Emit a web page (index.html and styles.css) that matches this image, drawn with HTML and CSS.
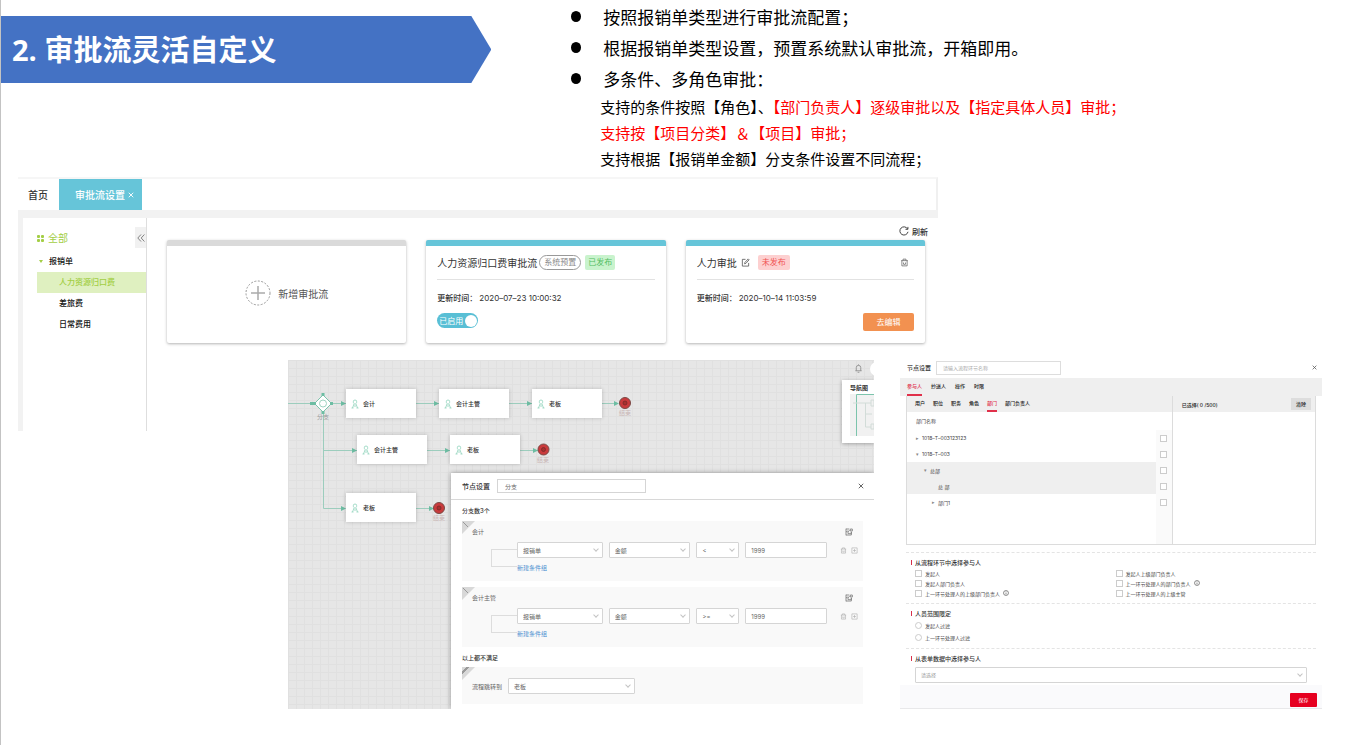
FILE: index.html
```html
<!DOCTYPE html>
<html lang="zh-CN">
<head>
<meta charset="utf-8">
<title>审批流灵活自定义</title>
<link rel="stylesheet" href="styles.css">
</head>
<body>
<svg width="0" height="0" class="defs" aria-hidden="true">
  <symbol id="i-person" viewBox="0 0 8 10"><path d="M4 1a1.7 1.7 0 0 1 1.7 1.8C5.700 4 5 5 4 5S2.300 4 2.300 2.800A1.700 1.700 0 0 1 4 1zM3 5 1.500 9M5 5l1.500 4M.5 9h2M5.500 9h2M4 6v2" fill="none" stroke="#8fd3bb" stroke-width=".8"/></symbol>
  <symbol id="i-trash" viewBox="0 0 12 12"><path d="M1.500 3.500h9M4 3.500V1.500h4v2M2.500 3.500v7h7v-7M4.700 6v2M7.300 6v2M4.500 8.500h3" fill="none" stroke="currentColor"/></symbol>
  <symbol id="i-plus" viewBox="0 0 12 12"><path d="M1.500 1.500h9v9h-9zM6 3.500v5M3.500 6h5" fill="none" stroke="currentColor"/></symbol>
  <symbol id="i-copy" viewBox="0 0 12 12"><path d="M1.500 1v10M1.500 1.500h5M1.500 5.500h2M1.500 10.500h8M4.500 3.500v5h5v-3M5 5.500 7 3.500M8 1.500h3v3h-3zM9.500 6v4.500" fill="none" stroke="currentColor" stroke-width="1.200"/></symbol>
  <symbol id="i-close" viewBox="0 0 8 8"><path d="m1 1 6 6M7 1 1 7" fill="none" stroke="currentColor" stroke-width="1.200"/></symbol>
  <symbol id="i-info" viewBox="0 0 8 8"><circle cx="4" cy="4" r="3.300" fill="none" stroke="currentColor" stroke-width=".8"/><path d="M4 2v.8M4 3.500V6" stroke="currentColor" stroke-width=".8"/></symbol>
</svg>

<main class="slide">
  <header class="intro">
    <h1 class="banner">2. 审批流灵活自定义</h1>
    <div class="notes">
      <ul class="points">
        <li>按照报销单类型进行审批流配置；</li>
        <li>根据报销单类型设置，预置系统默认审批流，开箱即用。</li>
        <li>多条件、多角色审批：</li>
      </ul>
      <p>支持的条件按照【角色】、<em>【部门负责人】逐级审批以及【指定具体人员】审批；</em></p>
      <p><em>支持按【项目分类】＆【项目】审批；</em></p>
      <p>支持根据【报销单金额】分支条件设置不同流程；</p>
    </div>
  </header>

  <div class="shots">
    <section class="app">
      <nav class="tabs">
        <a href="#home">首页</a>
        <a href="#flow" class="current">审批流设置<svg class="x"><use href="#i-close"/></svg></a>
      </nav>
      <div class="app-body">
        <aside class="side">
          <div class="side-top">
            <a href="#all" class="all"><span class="dots"><i></i><i></i><i></i><i></i></span>全部</a>
            <button class="fold" aria-label="收起"><svg viewBox="0 0 8 8"><path d="M4 .5.8 4 4 7.500M7.400.5 4.200 4l3.200 3.500" fill="none" stroke="#777" stroke-width=".9"/></svg></button>
          </div>
          <ul class="menu">
            <li><a href="#bx" class="group">报销单</a></li>
            <li><a href="#hr" class="current">人力资源归口费</a></li>
            <li><a href="#cl">差旅费</a></li>
            <li><a href="#rc">日常费用</a></li>
          </ul>
        </aside>
        <div class="content">
          <div class="toolbar"><button class="refresh"><svg viewBox="0 0 10 10"><path d="M8.600 3A4.100 4.100 0 1 0 9 5.800M8.900.9v2.400H6.500" fill="none" stroke="#444"/></svg>刷新</button></div>
          <div class="cards">
            <button class="card add">
              <svg viewBox="0 0 26 26"><circle cx="13" cy="13" r="12" fill="none" stroke="#999" stroke-dasharray="2 1.500"/><path d="M13 6v14M6 13h14" stroke="#aaa" stroke-width="1.500"/></svg>
              新增审批流
            </button>
            <article class="card">
              <div class="card-head"><h2>人力资源归口费审批流</h2><span class="pill">系统预置</span><span class="tag ok">已发布</span></div>
              <p class="time"><b>更新时间：</b>2020–07–23 10:00:32</p>
              <label class="switch"><input type="checkbox" checked>已启用<i></i></label>
            </article>
            <article class="card">
              <div class="card-head"><h2>人力审批</h2><svg class="edit" viewBox="0 0 10 10"><path d="M5 1.500H1.500v7.500h7V5.500M4 6.500 4.300 5 8 1l1 1-3.600 4z" fill="none" stroke="#555" stroke-width=".9"/></svg><span class="tag bad">未发布</span><button class="del" aria-label="删除"><svg><use href="#i-trash"/></svg></button></div>
              <p class="time"><b>更新时间：</b>2020–10–14 11:03:59</p>
              <button class="go">去编辑</button>
            </article>
          </div>
        </div>
      </div>
    </section>

    <section class="flow">
      <div class="canvas">
        <svg class="wires" viewBox="0 0 586 170">
          <g fill="none" stroke="#9ccdbd" stroke-width="1">
            <path d="M0 43.500h58M128 43.500h23M221 43.500h23M314 43.500h16M35.500 50v98.500h22M35.500 90.500H69M139 90.500h23M232 90.500h18M128 148.500h18"/>
          </g>
          <path fill="#6dbda3" d="M53 41l5 2.500-5 2.500zM146 41l5 2.500-5 2.500zM239 41l5 2.500-5 2.500zM326 41l5 2.500-5 2.500zM64 88l5 2.500-5 2.500zM157 88l5 2.500-5 2.500zM245 88l5 2.500-5 2.500zM53 146l5 2.500-5 2.500zM141 146l5 2.500-5 2.500zM22 42h5v3h-5z"/>
          <path d="m35 35 8.500 8.500L35 52l-8.500-8.500z" fill="#fff" stroke="#7cc4ac"/>
          <circle cx="35" cy="43.500" r="3.500" fill="none" stroke="#9fd3c1"/>
          <path fill="#6dbda3" d="M33.500 33h3v3h-3zM33.500 51h3v3h-3zM25 42h3v3h-3zM42 42h3v3h-3z"/>
          <g fill="#c93a3c" stroke="#7b4a46"><circle cx="337" cy="43" r="5.500"/><circle cx="255.500" cy="89.500" r="5.500"/><circle cx="151" cy="148" r="5.500"/></g>
          <g fill="#a9302f" stroke="#6f2a28" stroke-width=".7"><circle cx="337" cy="43" r="2"/><circle cx="255.500" cy="89.500" r="2"/><circle cx="151" cy="148" r="2"/></g>
        </svg>
        <span class="cap" style="left:29px;top:53px">分支</span>
        <div class="node" style="left:58px;top:29px"><svg><use href="#i-person"/></svg>会计</div>
        <div class="node" style="left:151px;top:29px"><svg><use href="#i-person"/></svg>会计主管</div>
        <div class="node" style="left:244px;top:29px"><svg><use href="#i-person"/></svg>老板</div>
        <div class="node" style="left:69px;top:75px"><svg><use href="#i-person"/></svg>会计主管</div>
        <div class="node" style="left:162px;top:75px"><svg><use href="#i-person"/></svg>老板</div>
        <div class="node" style="left:58px;top:133px"><svg><use href="#i-person"/></svg>老板</div>
        <span class="cap end" style="left:331px;top:49px">结束</span>
        <span class="cap end" style="left:249px;top:96px">结束</span>
        <span class="cap end" style="left:145px;top:154px">结束</span>
        <svg class="bell" viewBox="0 0 10 10"><path d="M1.500 7.500h7M2.500 7.500V4a2.500 2.500 0 0 1 5 0v3.500M4 9.200h2M5 .5v1" fill="none" stroke="#888" stroke-width=".9"/></svg>
        <div class="avatar"></div>
        <div class="minimap"><b>导航图</b>
          <svg viewBox="0 0 24 42"><path fill="#f1f1f1" d="M0 0h24v42H0z"/><path d="M6.500 42V.5H24" fill="none" stroke="#7cc4ac"/><path d="M3 9h18M15.500 9v24H21M15.500 20H22M21 6h3v6h-3zM21 30h3v5h-3z" fill="none" stroke="#d2dcd8"/></svg>
        </div>
      </div>
      <div class="dialog">
        <div class="dlg-head"><label for="branch">节点设置</label><input id="branch" value="分支"><button class="close" aria-label="关闭"><svg><use href="#i-close"/></svg></button></div>
        <div class="dlg-body">
          <h3>分支数3个</h3>
          <div class="block">
            <div class="block-top"><span>会计</span><button aria-label="复制"><svg><use href="#i-copy"/></svg></button></div>
            <div class="cond">
              <div class="bracket"></div>
              <div class="fields">
                <span class="sel"><select aria-label="单据"><option>报销单</option></select></span>
                <span class="sel"><select aria-label="字段"><option>金额</option></select></span>
                <span class="sel"><select aria-label="比较"><option>&lt;</option></select></span>
                <input aria-label="数值" value="1999">
              </div>
              <div class="acts"><button aria-label="删除"><svg><use href="#i-trash"/></svg></button><button aria-label="添加"><svg><use href="#i-plus"/></svg></button></div>
              <a href="#new1" class="new">新建条件组</a>
            </div>
          </div>
          <div class="block">
            <div class="block-top"><span>会计主管</span><button aria-label="复制"><svg><use href="#i-copy"/></svg></button></div>
            <div class="cond">
              <div class="bracket"></div>
              <div class="fields">
                <span class="sel"><select aria-label="单据"><option>报销单</option></select></span>
                <span class="sel"><select aria-label="字段"><option>金额</option></select></span>
                <span class="sel"><select aria-label="比较"><option>&gt;=</option></select></span>
                <input aria-label="数值" value="1999">
              </div>
              <div class="acts"><button aria-label="删除"><svg><use href="#i-trash"/></svg></button><button aria-label="添加"><svg><use href="#i-plus"/></svg></button></div>
              <a href="#new2" class="new">新建条件组</a>
            </div>
          </div>
          <h3 class="else">以上都不满足</h3>
          <div class="block jump"><label for="jump">流程跳转到</label><span class="sel"><select id="jump"><option>老板</option></select></span></div>
        </div>
      </div>
    </section>

    <section class="people">
      <div class="p-head"><label for="nname">节点设置</label><input id="nname" placeholder="请输入流程环节名称"><button class="close" aria-label="关闭"><svg><use href="#i-close"/></svg></button></div>
      <nav class="p-tabs"><a href="#a" class="on">参与人</a><a href="#b">抄送人</a><a href="#c">操作</a><a href="#d">时限</a></nav>
      <div class="picker">
        <div class="left">
          <nav class="sub"><a href="#e">用户</a><a href="#f">职位</a><a href="#g">职务</a><a href="#h">角色</a><a href="#i" class="on">部门</a><a href="#j">部门负责人</a></nav>
          <div class="tree-title">部门名称</div>
          <ul class="tree">
            <li><label for="t1"><i>▸</i>1018–T–003123123</label><span><input type="checkbox" id="t1"></span></li>
            <li><label for="t2"><i>▾</i>1018–T–003</label><span><input type="checkbox" id="t2"></span></li>
            <li class="l2 sel-row"><label for="t3"><i>▾</i>总部</label><span><input type="checkbox" id="t3"></span></li>
            <li class="l3 sel-row"><label for="t4"><i></i>总 部</label><span><input type="checkbox" id="t4"></span></li>
            <li class="l4"><label for="t5"><i>▸</i>部门1</label><span><input type="checkbox" id="t5"></span></li>
            <li class="rest"><b></b><span></span></li>
          </ul>
        </div>
        <div class="chosen"><div class="chosen-head"><span>已选择( 0 /500)</span><button>清除</button></div></div>
      </div>
      <div class="group-box">
        <h3>从流程环节中选择参与人</h3>
        <div class="checks">
          <label><input type="checkbox">发起人</label><label><input type="checkbox">发起人上级部门负责人</label>
          <label><input type="checkbox">发起人部门负责人</label><label><input type="checkbox">上一环节处理人的部门负责人<svg><use href="#i-info"/></svg></label>
          <label><input type="checkbox">上一环节处理人的上级部门负责人<svg><use href="#i-info"/></svg></label><label><input type="checkbox">上一环节处理人的上级主管</label>
        </div>
      </div>
      <div class="group-box">
        <h3>人员范围限定</h3>
        <div class="radios"><label><input type="radio" name="r">发起人过滤</label><label><input type="radio" name="r">上一环节处理人过滤</label></div>
      </div>
      <div class="group-box">
        <h3>从表单数据中选择参与人</h3>
        <span class="sel wide"><select aria-label="从表单数据中选择参与人"><option>请选择</option></select></span>
      </div>
      <footer class="p-foot"><button>保存</button></footer>
    </section>
  </div>
</main>
</body>
</html>
```

FILE: styles.css
```css
*, ::before, ::after { box-sizing: border-box; }
body { margin: 0; background: #fff; color: #333; font-family: Inter, "Noto Sans CJK SC", sans-serif; }
h1, h2, h3, p, ul { margin: 0; padding: 0; }
ul { list-style: none; }
a { color: inherit; text-decoration: none; }
button { border: 0; padding: 0; background: none; color: inherit; font: inherit; cursor: pointer; }
input, select { margin: 0; font: inherit; color: inherit; }
svg, button { flex-shrink: 0; }
.defs { position: absolute; }

.slide { min-height: 100vh; border-left: 1px solid #c3c3c3; }

/* heading and notes */
.intro { display: grid; grid-template-columns: 36% 1fr; column-gap: 80px; height: 177px; }
.banner { align-self: start; display: flex; align-items: center; height: 67px; margin-top: 16px; padding-left: 11px; background: #4472c4; color: #fff; font: bold 29px/67px "Open Sans", "Noto Sans CJK SC", sans-serif; white-space: nowrap; clip-path: polygon(0 0, calc(100% - 20px) 0, 100% 50%, calc(100% - 20px) 100%, 0 100%); }
.notes { padding-top: 1px; color: #000; font-family: "Noto Sans CJK SC", sans-serif; white-space: nowrap; }
.points li { display: flex; align-items: center; font-size: 17px; line-height: 31px; }
.points li::before { content: ""; width: 10px; height: 11px; margin-right: 22px; border-radius: 50%; background: #000; }
.notes p { padding-left: 29px; font-size: 15px; line-height: 26px; }
.notes em { color: #f00; font-style: normal; }

/* three overlapping windows */
.shots { display: grid; grid-template-columns: 270fr 586fr 26fr 38fr 384fr; grid-template-rows: 180px 74px auto; margin: 0 41px 0 17px; }
.app { grid-area: 1 / 1 / 3 / 5; display: flex; flex-direction: column; }
.flow { grid-area: 2 / 2 / 4 / 3; margin-top: 3px; }
.people { grid-area: 2 / 4 / 4 / 6; }

/* list window */
.tabs { display: flex; height: 33px; border-top: 2px solid #f6f6f6; border-right: 2px solid #f0f0f0; font-size: 10px; line-height: 32px; font-weight: 500; }
.tabs a { padding: 0 11px 0 10px; }
.tabs .current { display: flex; align-items: center; gap: 3px; padding: 0 8px 0 16px; background: #66c5d9; color: #fff; }
.tabs .x { width: 6px; height: 6px; }
.app-body { flex: 1; display: flex; border-top: 8px solid #f2f2f2; border-left: 5px solid #f2f2f2; }
.side { width: 124px; padding: 9px 0 0 14px; border-right: 1px solid #dedede; font-size: 8px; }
.side-top { display: flex; justify-content: space-between; }
.all { display: flex; align-items: center; gap: 4px; color: #a3ce45; font-size: 10px; line-height: 22px; }
.dots { display: grid; grid-template-columns: 3px 3px; gap: 1px; }
.dots i { height: 3px; border-radius: 1px; background: #a3ce45; }
.fold { display: grid; place-items: center; width: 11px; height: 21px; background: #f1f1f1; }
.fold svg { width: 8px; height: 8px; }
.menu { margin-top: 2px; color: #111; font-weight: 500; }
.menu a { display: block; padding-left: 22px; line-height: 21px; }
.menu .group { display: flex; align-items: center; gap: 6px; padding-left: 2px; }
.menu .group::before { content: ""; border: 2px solid transparent; border-top: 3px solid #a3ce45; border-bottom: 0; }
.menu .current { background: #dff0c0; color: #a3ce45; }
.content { flex: 1; padding: 4px 13px 0 20px; }
.toolbar { display: flex; justify-content: flex-end; height: 18px; margin-right: -3px; }
.refresh { display: flex; align-items: center; gap: 3px; font-size: 8px; font-weight: 500; }
.refresh svg { width: 10px; height: 10px; }
.cards { display: grid; grid-template-columns: 1fr 1fr 1fr; gap: 20px; }
.card { height: 103px; padding: 0 11px; border-top: 6px solid #66c5d9; border-radius: 2px; background: #fff; box-shadow: 0 1px 3px rgba(0, 0, 0, .3); display: flex; flex-direction: column; align-items: flex-start; }
.card.add { flex-direction: row; align-items: center; justify-content: center; gap: 7px; padding-bottom: 3px; border-top-color: #dadada; color: #555; font-size: 10px; }
.add svg { width: 26px; height: 26px; }
.card-head { align-self: stretch; display: flex; align-items: center; height: 34px; border-bottom: 1px solid #e2e2e2; gap: 2px; white-space: nowrap; }
.card-head h2 { font-size: 10px; font-weight: 400; }
.pill { padding: 0 4px; border: 1px solid #999; border-radius: 8px; color: #888; font-size: 8px; line-height: 13px; }
.tag { margin-left: 2px; padding: 0 3px; border-radius: 2px; font-size: 8px; line-height: 15px; }
.ok { background: #c9f3cd; color: #52bd61; }
.bad { margin-left: 6px; padding: 0 4px; background: #fdd0d0; color: #f05252; }
.edit { width: 9px; height: 9px; margin-left: 2px; }
.del { margin-left: auto; padding-right: 5px; color: #666; }
.del svg { display: block; width: 9px; height: 9px; }
.time { margin-top: 11px; font-size: 8px; line-height: 14px; }
.time b { margin-right: 2px; font-weight: 500; }
.switch { display: flex; align-items: center; gap: 2px; height: 15px; margin-top: 8px; padding: 0 1px 0 2px; border-radius: 8px; background: #59bfd5; color: #fff; font-size: 8px; }
.switch input { appearance: none; position: absolute; }
.switch i { width: 12px; height: 12px; border-radius: 50%; background: #fff; }
.go { align-self: flex-end; margin-top: 8px; width: 51px; border-radius: 2px; background: #f29150; color: #fff; font-size: 8px; line-height: 18px; }

/* flow window */
.flow { position: relative; padding: 113px 0 0 163px; overflow: hidden; background: #e6e6e6 repeating-linear-gradient(90deg, #e0e0e0 0 1px, transparent 1px 8px); font-size: 6px; }
.canvas { position: absolute; inset: 0; background: repeating-linear-gradient(#e0e0e0 0 1px, transparent 1px 8px); }
.wires { position: absolute; left: 0; top: 0; width: 586px; height: 170px; }
.node { position: absolute; display: flex; align-items: center; gap: 4px; width: 70px; height: 29px; padding-left: 5px; background: #fff; box-shadow: 0 0 4px rgba(0, 0, 0, .2); font-weight: 500; }
.node svg { width: 8px; height: 10px; }
.cap { position: absolute; color: #999; line-height: 8px; }
.end { color: #c9b5b5; }
.bell { position: absolute; right: 11px; top: 4px; width: 9px; height: 9px; }
.avatar { position: absolute; right: -10px; top: 2px; width: 14px; height: 14px; border-radius: 50%; background: #fff; }
.minimap { position: absolute; right: 0; top: 20px; width: 32px; height: 63px; padding: 3px 0 0 8px; background: #fff; box-shadow: 0 1px 4px rgba(0, 0, 0, .3); line-height: 9px; white-space: nowrap; }
.minimap svg { display: block; width: 24px; height: 42px; margin-top: 2px; }
.dialog { position: relative; height: 236px; background: #fff; box-shadow: 0 0 5px rgba(0, 0, 0, .35); }
.dlg-head { display: flex; align-items: center; height: 27px; padding: 0 10px 0 11px; border-bottom: 1px solid #d8d8d8; }
.dlg-head label { font-size: 7px; font-weight: 500; }
.dlg-head input { width: 37%; height: 14px; margin-left: 7px; padding: 0 7px; border: 1px solid #d5d5d5; color: #666; }
.close { margin-left: auto; color: #555; }
.close svg { display: block; width: 6px; height: 6px; }
.dlg-body { padding: 6px 11px 0; }
.dlg-body h3 { font-size: 6px; font-weight: 500; line-height: 9px; }
.block { position: relative; height: 60px; margin-top: 6px; padding: 6px 5px 0 10px; background: #f9f9f9; color: #666; }
.block::before { content: ""; position: absolute; left: 0; top: 0; width: 13px; height: 13px; background: linear-gradient(45deg, transparent 46%, #999 46% 54%, transparent 54%) 1px 1px / 5px 5px no-repeat, #d8d8d8; clip-path: polygon(0 0, 100% 0, 0 100%); }
.block.jump::before { background: repeating-linear-gradient(135deg, transparent 0 3px, #999 3px 5px, transparent 5px 7px), #d8d8d8; }
.block-top { display: flex; justify-content: space-between; align-items: center; height: 9px; padding-right: 5px; }
.block button svg { display: block; width: 7px; height: 7px; color: #aaa; }
.block-top button svg { width: 8px; height: 8px; color: #777; }
.cond { display: grid; grid-template-columns: 26px 1fr auto; margin: 6px 0 0 19px; }
.bracket { grid-row: 1 / 3; margin: 7px 0 5px; border: 1px solid #ddd; border-right: 0; }
.fields { display: grid; grid-template-columns: 86fr 82fr 43fr 82fr; gap: 6px; margin-right: 13px; }
.fields input, .sel select { width: 100%; height: 16px; padding: 0 5px; border: 1px solid #d5d5d5; border-radius: 1px; background: #fff; appearance: none; }
.sel { position: relative; display: block; }
.sel::after { content: ""; position: absolute; right: 5px; top: 5px; width: 4px; height: 4px; border: solid #c4c4c4; border-width: 0 1px 1px 0; transform: rotate(45deg); pointer-events: none; }
.acts { display: flex; align-items: center; gap: 4px; }
.new { grid-column: 2; color: #4a8fd0; line-height: 9px; margin-top: 5px; }
.else { margin-top: 6px; }
.jump { display: flex; align-items: center; gap: 6px; height: 37px; margin-top: 5px; padding-top: 1px; }
.jump .sel { width: 33%; }

/* participant window */
.people { font-size: 5px; color: #444; }
.p-head { display: flex; align-items: center; height: 21px; padding: 0 5px 0 7px; }
.p-head label { font-size: 6px; font-weight: 500; color: #333; }
.p-head input { width: 125px; height: 14px; margin-left: 5px; padding: 0 6px; border: 1px solid #ddd; }
.p-head input::placeholder { color: #aaa; }
.p-head .close svg { width: 5px; height: 5px; }
.p-tabs { display: flex; gap: 9px; height: 18px; padding: 1px 7px 0; background: #efefef; color: #222; font-weight: 500; line-height: 14px; }
.p-tabs a, .sub a { border-bottom: 2px solid transparent; }
.p-tabs .on, .sub .on { border-color: #e0304a; color: #e0304a; }
.picker { display: grid; grid-template-columns: 266fr 144fr; margin: 0 6px; min-height: 149px; border: 1px solid #dcdcdc; border-top: 0; }
.left { display: flex; flex-direction: column; }
.sub { display: flex; gap: 8px; height: 16px; padding: 0 8px; background: #efefef; color: #222; font-weight: 500; line-height: 14px; }
.tree-title { padding-left: 9px; line-height: 18px; }
.tree { flex: 1; display: flex; flex-direction: column; }
.tree li { display: grid; grid-template-columns: 1fr 16px; height: 16px; }
.tree .rest { flex: 1; height: auto; }
.tree label { display: flex; align-items: center; gap: 2px; padding-left: 9px; }
.tree i { width: 4px; font-style: normal; color: #888; }
.tree .l2 label { padding-left: 17px; }
.tree .l3 label, .tree .l4 label { padding-left: 25px; }
.sel-row label { background: #efefef; }
.tree span { display: grid; place-items: center; background: #fafafa; }
.people input[type="checkbox"], .people input[type="radio"] { appearance: none; width: 7px; height: 7px; border: 1px solid #ccc; background: #fff; }
.people input[type="radio"] { border-radius: 50%; }
.chosen { border-left: 1px solid #dcdcdc; }
.chosen-head { display: flex; justify-content: space-between; align-items: center; height: 16px; padding: 0 4px 0 9px; background: #efefef; color: #222; font-weight: 500; }
.chosen-head button { width: 20px; background: #ddd; line-height: 12px; font-weight: 500; }
.group-box { margin: 0 6px; padding: 5px 0 5px 9px; border-top: 1px dashed #e4e4e4; }
.picker + .group-box { margin-top: 7px; }
.group-box h3 { display: flex; align-items: center; gap: 3px; margin-left: -4px; color: #333; font-size: 6px; font-weight: 500; line-height: 9px; }
.group-box h3::before { content: ""; width: 1px; height: 5px; background: #d8304a; }
.checks { display: grid; grid-template-columns: 1fr 1fr; margin-top: 1px; }
.checks label, .radios label { display: flex; align-items: center; gap: 3px; height: 10px; }
.checks svg { width: 6px; height: 6px; }
.radios { margin-top: 1px; }
.radios label { height: 12px; }
.sel.wide { margin: 4px 9px -3px 0; }
.sel.wide select { color: #999; }
.p-foot { display: flex; justify-content: flex-end; align-items: center; height: 24px; padding: 6px 5px 0; border-bottom: 1px solid #e8e8ea; background: #fafafc; }
.p-foot button { width: 27px; border-radius: 1px; background: #e60020; color: #fff; line-height: 14px; }
```
